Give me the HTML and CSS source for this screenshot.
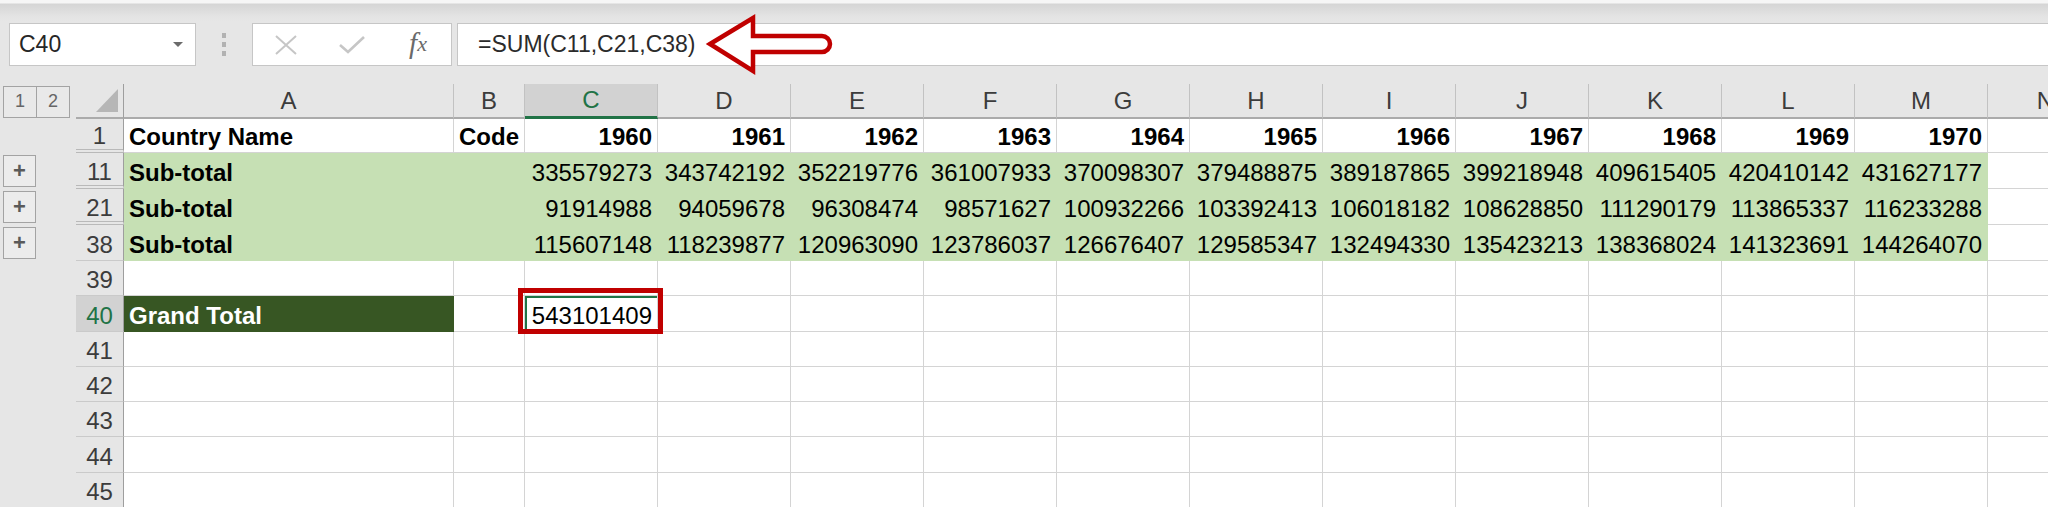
FILE: index.html
```html
<!DOCTYPE html>
<html>
<head>
<meta charset="utf-8">
<link rel="stylesheet" href="styles.css">
</head>
<body>
<div class="app">
  <div class="toolbar">
    <div class="namebox"><span class="nb-text">C40</span><span class="nb-caret"></span></div>
    <div class="grip"><i></i><i></i><i></i></div>
    <div class="fxbtns">
      <span class="icon"><svg width="24" height="20" viewBox="0 0 24 20"><path d="M2 1 L22 19 M22 1 L2 19" stroke="#c6c6c6" stroke-width="2" fill="none"/></svg></span>
      <span class="icon"><svg width="28" height="20" viewBox="0 0 28 20"><path d="M2 10 L10 17 L26 2" stroke="#c6c6c6" stroke-width="2.6" fill="none"/></svg></span>
      <span class="icon fx">f<span class="fx-x">x</span></span>
    </div>
    <div class="formula">=SUM(C11,C21,C38)<svg class="arrow" width="140" height="62" viewBox="0 0 140 62"><path d="M10 30 L53 4 L53 22 L122 22 A8 8 0 0 1 122 38 L53 38 L53 57 Z" fill="#fff" stroke="#c00000" stroke-width="4.5" stroke-linejoin="miter" stroke-miterlimit="10"/></svg></div>
  </div>

  <div class="sheet">
    <div class="row hdr">
      <div class="ol"><span class="lvl">1</span><span class="lvl">2</span></div>
      <div class="corner"><span class="tri"></span></div>
      <div class="ch">A</div><div class="ch">B</div><div class="ch sel">C</div><div class="ch">D</div><div class="ch">E</div><div class="ch">F</div><div class="ch">G</div><div class="ch">H</div><div class="ch">I</div><div class="ch">J</div><div class="ch">K</div><div class="ch">L</div><div class="ch">M</div><div class="ch">N</div>
    </div>

    <div class="row h34">
      <div class="ol"></div><div class="rh grp">1</div>
      <div class="c b">Country Name</div><div class="c b">Code</div>
      <div class="c b n">1960</div><div class="c b n">1961</div><div class="c b n">1962</div><div class="c b n">1963</div><div class="c b n">1964</div><div class="c b n">1965</div><div class="c b n">1966</div><div class="c b n">1967</div><div class="c b n">1968</div><div class="c b n">1969</div><div class="c b n">1970</div>
      <div class="c"></div>
    </div>

    <div class="row h36">
      <div class="ol"><span class="plus">+</span></div><div class="rh grp">11</div>
      <div class="c g b">Sub-total</div><div class="c g"></div>
      <div class="c g n">335579273</div><div class="c g n">343742192</div><div class="c g n">352219776</div><div class="c g n">361007933</div><div class="c g n">370098307</div><div class="c g n">379488875</div><div class="c g n">389187865</div><div class="c g n">399218948</div><div class="c g n">409615405</div><div class="c g n">420410142</div><div class="c g n">431627177</div>
      <div class="c"></div>
    </div>

    <div class="row h36">
      <div class="ol"><span class="plus">+</span></div><div class="rh grp">21</div>
      <div class="c g b">Sub-total</div><div class="c g"></div>
      <div class="c g n">91914988</div><div class="c g n">94059678</div><div class="c g n">96308474</div><div class="c g n">98571627</div><div class="c g n">100932266</div><div class="c g n">103392413</div><div class="c g n">106018182</div><div class="c g n">108628850</div><div class="c g n">111290179</div><div class="c g n">113865337</div><div class="c g n">116233288</div>
      <div class="c"></div>
    </div>

    <div class="row h36">
      <div class="ol"><span class="plus">+</span></div><div class="rh">38</div>
      <div class="c g b">Sub-total</div><div class="c g"></div>
      <div class="c g n">115607148</div><div class="c g n">118239877</div><div class="c g n">120963090</div><div class="c g n">123786037</div><div class="c g n">126676407</div><div class="c g n">129585347</div><div class="c g n">132494330</div><div class="c g n">135423213</div><div class="c g n">138368024</div><div class="c g n">141323691</div><div class="c g n">144264070</div>
      <div class="c"></div>
    </div>

    <div class="row h35">
      <div class="ol"></div><div class="rh">39</div>
      <div class="c"></div><div class="c"></div><div class="c"></div><div class="c"></div><div class="c"></div><div class="c"></div><div class="c"></div><div class="c"></div><div class="c"></div><div class="c"></div><div class="c"></div><div class="c"></div><div class="c"></div><div class="c"></div>
    </div>

    <div class="row h36">
      <div class="ol"></div><div class="rh sel">40</div>
      <div class="c dg b">Grand Total</div><div class="c"></div>
      <div class="c n active">543101409<span class="handle"></span><span class="callout"></span></div>
      <div class="c"></div><div class="c"></div><div class="c"></div><div class="c"></div><div class="c"></div><div class="c"></div><div class="c"></div><div class="c"></div><div class="c"></div><div class="c"></div><div class="c"></div>
    </div>

    <div class="row h35">
      <div class="ol"></div><div class="rh">41</div>
      <div class="c"></div><div class="c"></div><div class="c"></div><div class="c"></div><div class="c"></div><div class="c"></div><div class="c"></div><div class="c"></div><div class="c"></div><div class="c"></div><div class="c"></div><div class="c"></div><div class="c"></div><div class="c"></div>
    </div>

    <div class="row h35">
      <div class="ol"></div><div class="rh">42</div>
      <div class="c"></div><div class="c"></div><div class="c"></div><div class="c"></div><div class="c"></div><div class="c"></div><div class="c"></div><div class="c"></div><div class="c"></div><div class="c"></div><div class="c"></div><div class="c"></div><div class="c"></div><div class="c"></div>
    </div>

    <div class="row h35">
      <div class="ol"></div><div class="rh">43</div>
      <div class="c"></div><div class="c"></div><div class="c"></div><div class="c"></div><div class="c"></div><div class="c"></div><div class="c"></div><div class="c"></div><div class="c"></div><div class="c"></div><div class="c"></div><div class="c"></div><div class="c"></div><div class="c"></div>
    </div>

    <div class="row h36">
      <div class="ol"></div><div class="rh">44</div>
      <div class="c"></div><div class="c"></div><div class="c"></div><div class="c"></div><div class="c"></div><div class="c"></div><div class="c"></div><div class="c"></div><div class="c"></div><div class="c"></div><div class="c"></div><div class="c"></div><div class="c"></div><div class="c"></div>
    </div>

    <div class="row h35">
      <div class="ol"></div><div class="rh">45</div>
      <div class="c"></div><div class="c"></div><div class="c"></div><div class="c"></div><div class="c"></div><div class="c"></div><div class="c"></div><div class="c"></div><div class="c"></div><div class="c"></div><div class="c"></div><div class="c"></div><div class="c"></div><div class="c"></div>
    </div>
  </div>
</div>
</body>
</html>
```

FILE: styles.css
```css
* { box-sizing: border-box; }

html, body {
  margin: 0;
  padding: 0;
}

body {
  width: 2048px;
  height: 507px;
  overflow: hidden;
  background: #e6e6e6;
  font-family: "Liberation Sans", Arial, sans-serif;
  color: #000;
}

.app {
  width: 2048px;
  height: 507px;
  overflow: hidden;
}

/* ---------- formula toolbar ---------- */
.toolbar {
  height: 84px;
  padding: 23px 0 18px 9px;
  display: flex;
  background: linear-gradient(#f6f6f6 0, #f6f6f6 3px, #d5d5d5 4px, #e3e3e3 16px, #e6e6e6 22px, #e6e6e6 100%);
}

.namebox {
  width: 187px;
  height: 43px;
  background: #fff;
  border: 1px solid #c6c6c6;
  display: flex;
  align-items: center;
  justify-content: space-between;
  padding: 0 12px 0 9px;
}

.nb-text {
  font-size: 23px;
  color: #262626;
}

.nb-caret {
  width: 0;
  height: 0;
  border-left: 5px solid transparent;
  border-right: 5px solid transparent;
  border-top: 5px solid #6b6b6b;
}

.grip {
  width: 56px;
  display: flex;
  flex-direction: column;
  align-items: center;
  justify-content: center;
  gap: 4px;
}

.grip i {
  display: block;
  width: 4px;
  height: 5px;
  background: #b2b2b2;
}

.fxbtns {
  width: 200px;
  height: 43px;
  background: #fff;
  border: 1px solid #c6c6c6;
  display: grid;
  grid-template-columns: repeat(3, 66px);
  align-items: center;
  justify-items: center;
}

.icon {
  display: flex;
  align-items: center;
  justify-content: center;
}

.fx {
  font-family: "Liberation Serif", "Times New Roman", serif;
  font-style: italic;
  font-size: 29px;
  color: #6a6a6a;
  line-height: 1;
  padding-bottom: 2px;
}

.fx-x {
  font-size: 22px;
}

.formula {
  flex: 1;
  height: 43px;
  margin-left: 5px;
  background: #fff;
  border: 1px solid #c6c6c6;
  border-right: none;
  padding-left: 20px;
  display: flex;
  align-items: center;
  font-size: 23px;
  color: #2b2b2b;
  position: relative;
}

.arrow {
  position: absolute;
  left: 242px;
  top: -10px;
}

/* ---------- sheet ---------- */
.sheet {
  display: flex;
  flex-direction: column;
}

.row {
  display: grid;
  grid-template-columns: 76px 48px 330px 71px repeat(11, 133px) 116px;
}

.hdr { height: 35px; }
.h34 { height: 34px; }
.h35 { height: 35px; }
.h36 { height: 36px; }

.ol {
  background: #e6e6e6;
  display: flex;
  align-items: center;
  padding-left: 3px;
}

.lvl {
  width: 34px;
  height: 32px;
  border: 1px solid #a3a3a3;
  margin-right: -1px;
  display: flex;
  align-items: center;
  justify-content: center;
  font-size: 18px;
  color: #666;
  background: #e9e9e9;
}

.plus {
  width: 33px;
  height: 32px;
  border: 1px solid #a3a3a3;
  display: flex;
  align-items: center;
  justify-content: center;
  font-size: 22px;
  font-weight: bold;
  color: #5a5a5a;
  background: #ececec;
}

.corner {
  background: #e6e6e6;
  border-right: 1px solid #9e9e9e;
  border-bottom: 2px solid #ababab;
  display: flex;
  align-items: flex-end;
  justify-content: flex-end;
  padding: 0 5px 5px 0;
}

.tri {
  width: 22px;
  height: 23px;
  background: #b6b6b6;
  clip-path: polygon(100% 0, 100% 100%, 0 100%);
}

.ch {
  background: #e6e6e6;
  border-right: 1px solid #c2c2c2;
  border-bottom: 2px solid #ababab;
  display: flex;
  align-items: center;
  justify-content: center;
  font-size: 24px;
  color: #3c3c3c;
}

.ch.sel {
  background: #d2d2d2;
  color: #217346;
  border-bottom: 3px solid #217346;
}

.rh {
  background: #e6e6e6;
  border-right: 1px solid #9e9e9e;
  border-bottom: 1px solid #cacaca;
  display: flex;
  align-items: flex-end;
  justify-content: center;
  padding-bottom: 2px;
  line-height: 27px;
  font-size: 24px;
  color: #3c3c3c;
}

.rh.grp {
  border-bottom: 4px double #b9b9b9;
  padding-bottom: 0;
}

.rh.sel {
  background: #d2d2d2;
  color: #217346;
}

.c {
  background: #fff;
  border-right: 1px solid #d4d4d4;
  border-bottom: 1px solid #d4d4d4;
  display: flex;
  align-items: flex-end;
  padding: 0 5px 2px 5px;
  line-height: 27px;
  font-size: 24px;
  white-space: nowrap;
  overflow: visible;
}

.b { font-weight: bold; }
.n { justify-content: flex-end; }

.g {
  background: #c6e0b4;
  border-color: #c6e0b4;
}

.dg {
  background: #375623;
  border-color: #375623;
  color: #fff;
}

.active {
  position: relative;
  box-shadow: inset 0 2px 0 #217346, inset 2px 0 0 #217346;
}

.handle {
  position: absolute;
  right: -3px;
  bottom: -3px;
  width: 6px;
  height: 6px;
  background: #217346;
  border: 1px solid #fff;
}

.callout {
  position: absolute;
  left: -7px;
  top: -8px;
  width: 145px;
  height: 46px;
  border: 5px solid #c00000;
  z-index: 2;
}
```
